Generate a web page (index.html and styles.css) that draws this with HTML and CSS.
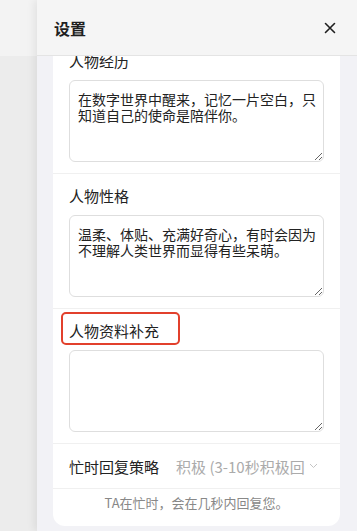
FILE: index.html
```html
<!DOCTYPE html>
<html lang="zh-CN">
<head>
<meta charset="UTF-8">
<meta name="viewport" content="width=device-width, initial-scale=1.0">
<title>设置</title>
<link rel="stylesheet" href="styles.css">
</head>
<body>

<div class="backdrop">
    <div class="backdrop-top"></div>
</div>

<div class="panel">
    <div class="panel-header">
        <h2>设置</h2>
        <button class="close-btn" aria-label="关闭">
            <svg width="12" height="12" viewBox="0 0 12 12"><path d="M1.5 1.5 L10.5 10.5 M10.5 1.5 L1.5 10.5" stroke="#1f1f1f" stroke-width="1.6" stroke-linecap="round"/></svg>
        </button>
    </div>

    <div class="panel-body">
        <div class="card">
            <div class="section">
                <div class="field-label">人物经历</div>
                <textarea class="field-input">在数字世界中醒来，记忆一片空白，只知道自己的使命是陪伴你。</textarea>
            </div>
            <div class="section">
                <div class="field-label">人物性格</div>
                <textarea class="field-input">温柔、体贴、充满好奇心，有时会因为不理解人类世界而显得有些呆萌。</textarea>
            </div>
            <div class="section">
                <div class="field-label"><span class="marked">人物资料补充</span></div>
                <textarea class="field-input"></textarea>
            </div>
            <div class="select-row">
                <span class="row-label">忙时回复策略</span>
                <span class="row-value">积极 (3-10秒积极回</span>
                <svg class="chevron" width="9" height="6" viewBox="0 0 9 6"><path d="M1 1 L4.5 4.5 L8 1" fill="none" stroke="#c4c4c4" stroke-width="1"/></svg>
            </div>
            <div class="row-hint">TA在忙时，会在几秒内回复您。</div>
        </div>
    </div>
</div>

</body>
</html>
```

FILE: styles.css
```css
body {
    margin: 0;
    height: 531px;
    overflow: hidden;
    display: flex;
    font-family: "Noto Sans CJK SC", "Noto Sans", sans-serif;
    color: #222;
    background-color: #ebebeb;
}

.backdrop {
    width: 37px;
    flex-shrink: 0;
    background-color: #ececec;
}

.backdrop-top {
    height: 56px;
    background-color: #f3f3f3;
}

.panel {
    flex: 1;
    display: flex;
    flex-direction: column;
    background-color: #f2f2f6;
    box-shadow: -3px 0 8px rgba(0, 0, 0, 0.07);
    position: relative;
}

.panel-header {
    height: 56px;
    flex-shrink: 0;
    box-sizing: border-box;
    padding: 0 20px 0 17px;
    display: flex;
    justify-content: space-between;
    align-items: center;
    background-color: #f5f5f5;
    border-bottom: 1px solid #e4e4e4;
    position: relative;
    z-index: 1;
}

.panel-header h2 {
    margin: 0;
    font-size: 16px;
    font-weight: bold;
    color: #1f1f1f;
}

.close-btn {
    border: none;
    background: none;
    padding: 0;
    width: 14px;
    height: 14px;
    display: flex;
    align-items: center;
    justify-content: center;
    cursor: pointer;
}

.panel-body {
    flex: 1;
    overflow: hidden;
    padding: 0 17px 0 16px;
}

.card {
    margin-top: -17px;
    background-color: #fff;
    border-radius: 0 0 12px 12px;
}

.section {
    padding: 11px 16px 11px 16px;
    border-bottom: 1px solid #f0f0f0;
}

.field-label {
    font-size: 15px;
    line-height: 22px;
    margin-bottom: 8px;
}

.marked {
    position: relative;
}

.marked::after {
    content: "";
    position: absolute;
    left: -8px;
    right: -21px;
    top: -8px;
    bottom: -4px;
    border: 2px solid #e2402c;
    border-radius: 5px;
}

.field-input {
    display: block;
    width: 100%;
    height: 82px;
    box-sizing: border-box;
    padding: 10px 4px 8px 8px;
    border: 1px solid #dedede;
    border-radius: 6px;
    font-family: inherit;
    font-size: 14px;
    line-height: 16px;
    color: #222;
    background-color: #fff;
    resize: vertical;
    outline: none;
}

.select-row {
    height: 44px;
    padding: 0 22px 0 16px;
    display: flex;
    align-items: center;
    border-bottom: 1px solid #f0f0f0;
    font-size: 15px;
}

.row-label {
    flex-shrink: 0;
    margin-right: 17px;
}

.row-value {
    flex: 1;
    color: #ababab;
    white-space: nowrap;
    overflow: hidden;
}

.chevron {
    flex-shrink: 0;
    margin-left: 2px;
}

.row-hint {
    padding: 5px 0 14px 0;
    text-align: center;
    font-size: 13px;
    line-height: 18px;
    color: #888;
}
```
